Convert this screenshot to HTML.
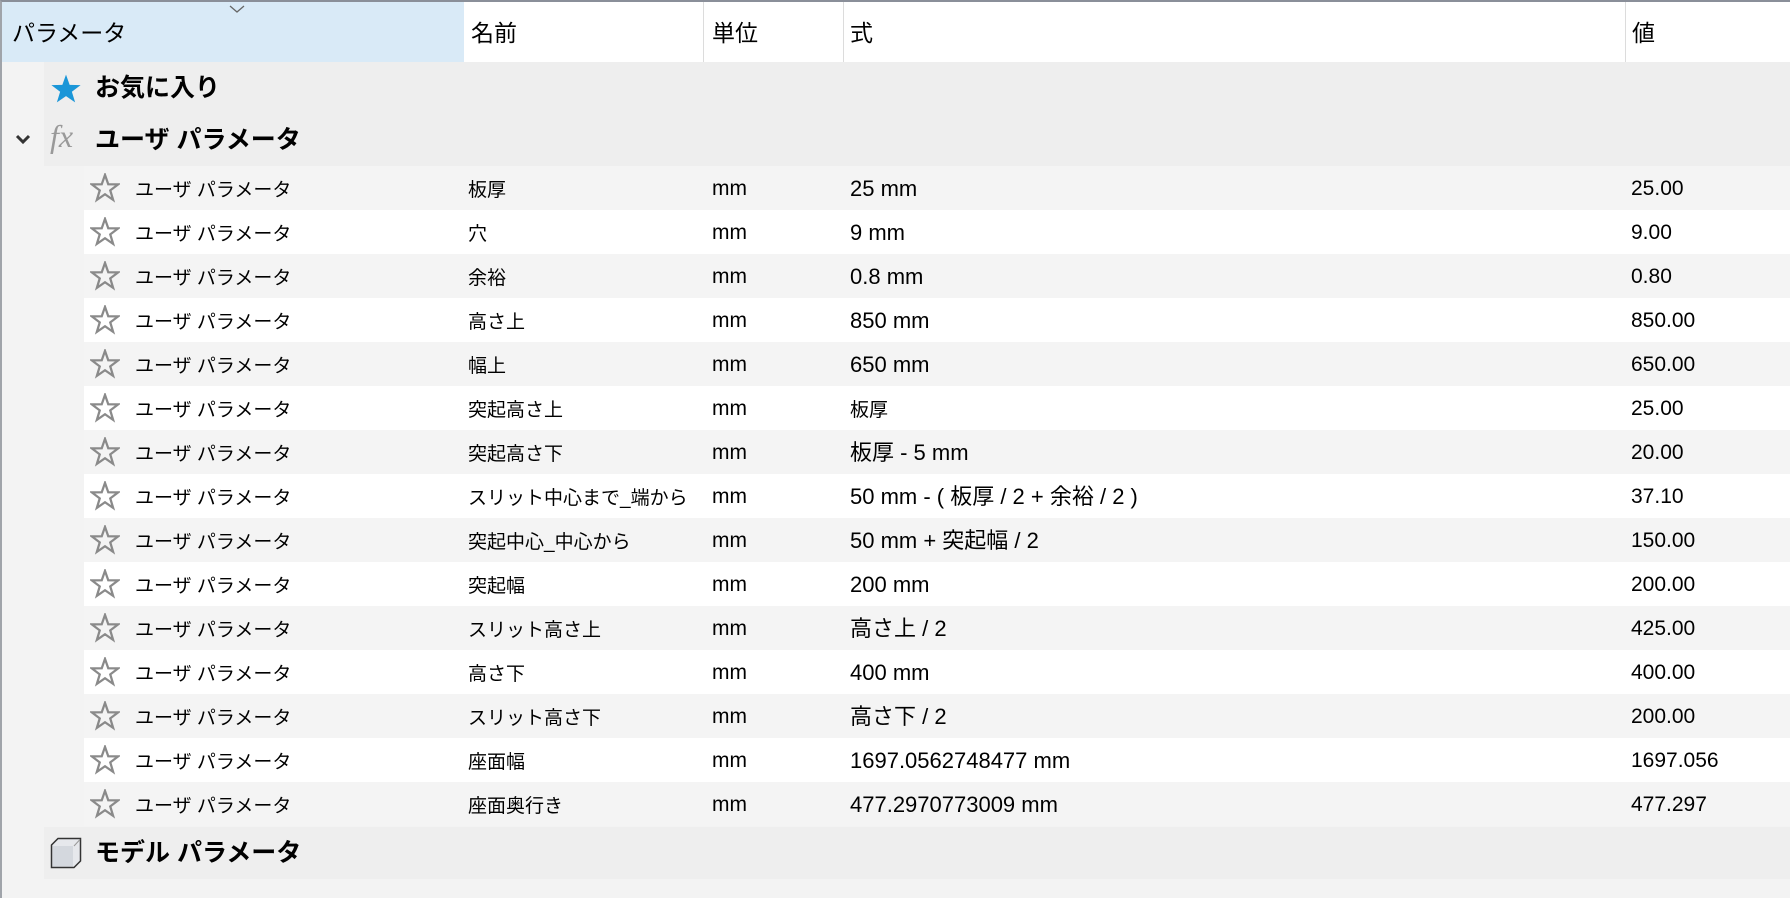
<!DOCTYPE html>
<html><head><meta charset="utf-8"><style>
*{margin:0;padding:0;box-sizing:border-box}
body{width:1790px;height:898px;overflow:hidden;background:#f3f3f3;font-family:"Liberation Sans","Noto Sans CJK JP",sans-serif;color:#000;position:relative}
.frame{position:absolute;left:0;top:0;width:1790px;height:898px;border-top:2px solid #8a8f99;border-left:2px solid #a0a4aa}
.hdr{position:absolute;top:2px;left:2px;width:1788px;height:60px;background:#fff}
.hdr .blue{position:absolute;left:0;top:0;width:462px;height:60px;background:#d9eaf7}
.hdr span{position:absolute;top:16px;font-size:23px;line-height:30px}
.sep{position:absolute;top:2px;width:1px;height:60px;background:#dcdcdc}
.grp{position:absolute;left:44px;width:1746px;height:52px;background:#eeeeee}
.grp b{position:absolute;left:51px;top:10px;font-size:25px;line-height:32px;font-weight:bold}
.row{position:absolute;left:84px;width:1706px;height:44px;font-size:21px}
.row span{position:absolute;top:10px;white-space:nowrap;line-height:26px}
.row span.j{font-size:19px;top:12px}
.row span.f{font-size:22px}
.o{background:#f4f4f4}.e{background:#fff}
.star{position:absolute;left:6px;top:7px}
</style></head><body>
<div class="hdr"><div class="blue"></div>
<span style="left:10px">パラメータ</span>
<span style="left:469px">名前</span>
<span style="left:710px">単位</span>
<span style="left:848px">式</span>
<span style="left:1630px">値</span>
<svg style="position:absolute;left:227px;top:3px" width="16" height="9"><path d="M1 1 L8 7 L15 1" fill="none" stroke="#666" stroke-width="1.3"/></svg>
</div>
<div class="sep" style="left:703px"></div><div class="sep" style="left:843px"></div><div class="sep" style="left:1625px"></div>

<div class="grp" style="top:62px">
<svg style="position:absolute;left:6px;top:12px" width="32" height="30" viewBox="0 0 24 23"><path d="M12 0.5 L14.8 8.3 L23.2 8.5 L16.5 13.6 L19 21.8 L12 17 L5 21.8 L7.5 13.6 L0.8 8.5 L9.2 8.3 Z" fill="#1a96d8"/></svg>
<b>お気に入り</b></div>
<div class="grp" style="top:114px">
<span style="position:absolute;left:6px;top:4px;font-family:'Liberation Serif',serif;font-style:italic;font-size:32px;color:#999">fx</span>
<b>ユーザ パラメータ</b></div>
<svg style="position:absolute;left:15px;top:134px" width="16" height="11"><path d="M2 2 L8 8 L14 2" fill="none" stroke="#333" stroke-width="3"/></svg>

<div class="row o" style="top:166px"><svg class="star" width="30" height="30" viewBox="0 0 24 24"><path d="M12 1.5 L14.6 9 L22.5 9.1 L16.2 13.9 L18.5 21.5 L12 17 L5.5 21.5 L7.8 13.9 L1.5 9.1 L9.4 9 Z" fill="none" stroke="#8a8a8a" stroke-width="1.8"/></svg><span class="j" style="left:51px">ユーザ パラメータ</span><span class="j" style="left:384px">板厚</span><span style="left:628px">mm</span><span class="f" style="left:766px">25 mm</span><span style="left:1547px">25.00</span></div>
<div class="row e" style="top:210px"><svg class="star" width="30" height="30" viewBox="0 0 24 24"><path d="M12 1.5 L14.6 9 L22.5 9.1 L16.2 13.9 L18.5 21.5 L12 17 L5.5 21.5 L7.8 13.9 L1.5 9.1 L9.4 9 Z" fill="none" stroke="#8a8a8a" stroke-width="1.8"/></svg><span class="j" style="left:51px">ユーザ パラメータ</span><span class="j" style="left:384px">穴</span><span style="left:628px">mm</span><span class="f" style="left:766px">9 mm</span><span style="left:1547px">9.00</span></div>
<div class="row o" style="top:254px"><svg class="star" width="30" height="30" viewBox="0 0 24 24"><path d="M12 1.5 L14.6 9 L22.5 9.1 L16.2 13.9 L18.5 21.5 L12 17 L5.5 21.5 L7.8 13.9 L1.5 9.1 L9.4 9 Z" fill="none" stroke="#8a8a8a" stroke-width="1.8"/></svg><span class="j" style="left:51px">ユーザ パラメータ</span><span class="j" style="left:384px">余裕</span><span style="left:628px">mm</span><span class="f" style="left:766px">0.8 mm</span><span style="left:1547px">0.80</span></div>
<div class="row e" style="top:298px"><svg class="star" width="30" height="30" viewBox="0 0 24 24"><path d="M12 1.5 L14.6 9 L22.5 9.1 L16.2 13.9 L18.5 21.5 L12 17 L5.5 21.5 L7.8 13.9 L1.5 9.1 L9.4 9 Z" fill="none" stroke="#8a8a8a" stroke-width="1.8"/></svg><span class="j" style="left:51px">ユーザ パラメータ</span><span class="j" style="left:384px">高さ上</span><span style="left:628px">mm</span><span class="f" style="left:766px">850 mm</span><span style="left:1547px">850.00</span></div>
<div class="row o" style="top:342px"><svg class="star" width="30" height="30" viewBox="0 0 24 24"><path d="M12 1.5 L14.6 9 L22.5 9.1 L16.2 13.9 L18.5 21.5 L12 17 L5.5 21.5 L7.8 13.9 L1.5 9.1 L9.4 9 Z" fill="none" stroke="#8a8a8a" stroke-width="1.8"/></svg><span class="j" style="left:51px">ユーザ パラメータ</span><span class="j" style="left:384px">幅上</span><span style="left:628px">mm</span><span class="f" style="left:766px">650 mm</span><span style="left:1547px">650.00</span></div>
<div class="row e" style="top:386px"><svg class="star" width="30" height="30" viewBox="0 0 24 24"><path d="M12 1.5 L14.6 9 L22.5 9.1 L16.2 13.9 L18.5 21.5 L12 17 L5.5 21.5 L7.8 13.9 L1.5 9.1 L9.4 9 Z" fill="none" stroke="#8a8a8a" stroke-width="1.8"/></svg><span class="j" style="left:51px">ユーザ パラメータ</span><span class="j" style="left:384px">突起高さ上</span><span style="left:628px">mm</span><span class="j" style="left:766px">板厚</span><span style="left:1547px">25.00</span></div>
<div class="row o" style="top:430px"><svg class="star" width="30" height="30" viewBox="0 0 24 24"><path d="M12 1.5 L14.6 9 L22.5 9.1 L16.2 13.9 L18.5 21.5 L12 17 L5.5 21.5 L7.8 13.9 L1.5 9.1 L9.4 9 Z" fill="none" stroke="#8a8a8a" stroke-width="1.8"/></svg><span class="j" style="left:51px">ユーザ パラメータ</span><span class="j" style="left:384px">突起高さ下</span><span style="left:628px">mm</span><span class="f" style="left:766px">板厚 - 5 mm</span><span style="left:1547px">20.00</span></div>
<div class="row e" style="top:474px"><svg class="star" width="30" height="30" viewBox="0 0 24 24"><path d="M12 1.5 L14.6 9 L22.5 9.1 L16.2 13.9 L18.5 21.5 L12 17 L5.5 21.5 L7.8 13.9 L1.5 9.1 L9.4 9 Z" fill="none" stroke="#8a8a8a" stroke-width="1.8"/></svg><span class="j" style="left:51px">ユーザ パラメータ</span><span class="j" style="left:384px">スリット中心まで_端から</span><span style="left:628px">mm</span><span class="f" style="left:766px">50 mm - ( 板厚 / 2 + 余裕 / 2 )</span><span style="left:1547px">37.10</span></div>
<div class="row o" style="top:518px"><svg class="star" width="30" height="30" viewBox="0 0 24 24"><path d="M12 1.5 L14.6 9 L22.5 9.1 L16.2 13.9 L18.5 21.5 L12 17 L5.5 21.5 L7.8 13.9 L1.5 9.1 L9.4 9 Z" fill="none" stroke="#8a8a8a" stroke-width="1.8"/></svg><span class="j" style="left:51px">ユーザ パラメータ</span><span class="j" style="left:384px">突起中心_中心から</span><span style="left:628px">mm</span><span class="f" style="left:766px">50 mm + 突起幅 / 2</span><span style="left:1547px">150.00</span></div>
<div class="row e" style="top:562px"><svg class="star" width="30" height="30" viewBox="0 0 24 24"><path d="M12 1.5 L14.6 9 L22.5 9.1 L16.2 13.9 L18.5 21.5 L12 17 L5.5 21.5 L7.8 13.9 L1.5 9.1 L9.4 9 Z" fill="none" stroke="#8a8a8a" stroke-width="1.8"/></svg><span class="j" style="left:51px">ユーザ パラメータ</span><span class="j" style="left:384px">突起幅</span><span style="left:628px">mm</span><span class="f" style="left:766px">200 mm</span><span style="left:1547px">200.00</span></div>
<div class="row o" style="top:606px"><svg class="star" width="30" height="30" viewBox="0 0 24 24"><path d="M12 1.5 L14.6 9 L22.5 9.1 L16.2 13.9 L18.5 21.5 L12 17 L5.5 21.5 L7.8 13.9 L1.5 9.1 L9.4 9 Z" fill="none" stroke="#8a8a8a" stroke-width="1.8"/></svg><span class="j" style="left:51px">ユーザ パラメータ</span><span class="j" style="left:384px">スリット高さ上</span><span style="left:628px">mm</span><span class="f" style="left:766px">高さ上 / 2</span><span style="left:1547px">425.00</span></div>
<div class="row e" style="top:650px"><svg class="star" width="30" height="30" viewBox="0 0 24 24"><path d="M12 1.5 L14.6 9 L22.5 9.1 L16.2 13.9 L18.5 21.5 L12 17 L5.5 21.5 L7.8 13.9 L1.5 9.1 L9.4 9 Z" fill="none" stroke="#8a8a8a" stroke-width="1.8"/></svg><span class="j" style="left:51px">ユーザ パラメータ</span><span class="j" style="left:384px">高さ下</span><span style="left:628px">mm</span><span class="f" style="left:766px">400 mm</span><span style="left:1547px">400.00</span></div>
<div class="row o" style="top:694px"><svg class="star" width="30" height="30" viewBox="0 0 24 24"><path d="M12 1.5 L14.6 9 L22.5 9.1 L16.2 13.9 L18.5 21.5 L12 17 L5.5 21.5 L7.8 13.9 L1.5 9.1 L9.4 9 Z" fill="none" stroke="#8a8a8a" stroke-width="1.8"/></svg><span class="j" style="left:51px">ユーザ パラメータ</span><span class="j" style="left:384px">スリット高さ下</span><span style="left:628px">mm</span><span class="f" style="left:766px">高さ下 / 2</span><span style="left:1547px">200.00</span></div>
<div class="row e" style="top:738px"><svg class="star" width="30" height="30" viewBox="0 0 24 24"><path d="M12 1.5 L14.6 9 L22.5 9.1 L16.2 13.9 L18.5 21.5 L12 17 L5.5 21.5 L7.8 13.9 L1.5 9.1 L9.4 9 Z" fill="none" stroke="#8a8a8a" stroke-width="1.8"/></svg><span class="j" style="left:51px">ユーザ パラメータ</span><span class="j" style="left:384px">座面幅</span><span style="left:628px">mm</span><span class="f" style="left:766px">1697.0562748477 mm</span><span style="left:1547px">1697.056</span></div>
<div class="row o" style="top:782px"><svg class="star" width="30" height="30" viewBox="0 0 24 24"><path d="M12 1.5 L14.6 9 L22.5 9.1 L16.2 13.9 L18.5 21.5 L12 17 L5.5 21.5 L7.8 13.9 L1.5 9.1 L9.4 9 Z" fill="none" stroke="#8a8a8a" stroke-width="1.8"/></svg><span class="j" style="left:51px">ユーザ パラメータ</span><span class="j" style="left:384px">座面奥行き</span><span style="left:628px">mm</span><span class="f" style="left:766px">477.2970773009 mm</span><span style="left:1547px">477.297</span></div>

<div class="grp" style="top:827px">
<svg style="position:absolute;left:6px;top:10px" width="32" height="32" viewBox="0 0 32 32"><path d="M1.5 8 L8 1.5 L30.5 1.5 L30.5 24 L24 30.5 L1.5 30.5 Z" fill="#e6e8ec" stroke="#333" stroke-width="1.5"/><path d="M2.5 9 L23 9 L23 29.5 L2.5 29.5 Z" fill="#d4d8de"/><path d="M24 9 L30 2.5" stroke="#999" stroke-width="1"/></svg>
<b>モデル パラメータ</b></div>
<div class="frame"></div>
</body></html>
